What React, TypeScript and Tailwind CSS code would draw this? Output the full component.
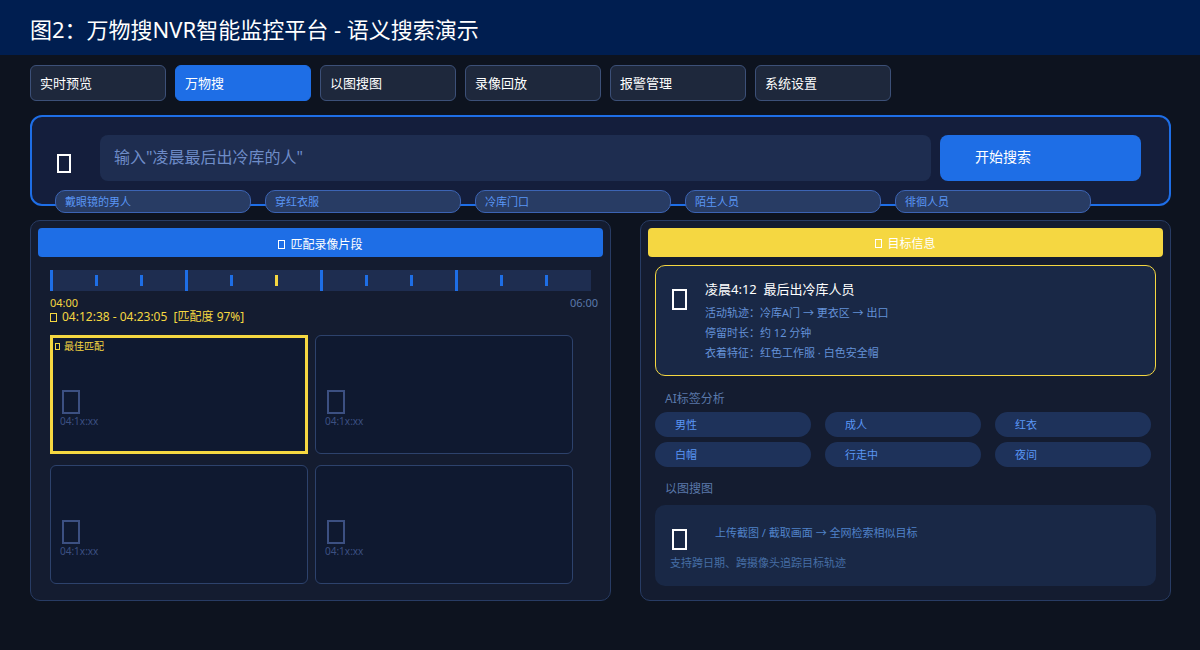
import clsx from "clsx";

const tabs = ["实时预览", "万物搜", "以图搜图", "录像回放", "报警管理", "系统设置"];
const activeTab = "万物搜";

const quickTags = ["戴眼镜的男人", "穿红衣服", "冷库门口", "陌生人员", "徘徊人员"];

const ticks = Array.from({ length: 12 }, (_, i) => ({
  major: i % 3 === 0,
  hit: i === 5,
}));

const clips = [
  { id: 1, time: "04:1x:xx", best: true },
  { id: 2, time: "04:1x:xx", best: false },
  { id: 3, time: "04:1x:xx", best: false },
  { id: 4, time: "04:1x:xx", best: false },
];

const details = [
  "活动轨迹：冷库A门 → 更衣区 → 出口",
  "停留时长：约 12 分钟",
  "衣着特征：红色工作服 · 白色安全帽",
];

const aiTags = ["男性", "成人", "红衣", "白帽", "行走中", "夜间"];

const Box = ({ className }: { className: string }) => (
  <span aria-hidden="true" className={clsx("inline-block shrink-0 border-current", className)} />
);

function Tabs() {
  return (
    <nav className="mt-[10px] flex flex-wrap gap-[9px]">
      {tabs.map((tab) => (
        <button
          key={tab}
          type="button"
          className={clsx(
            "h-9 w-[136px] rounded-md border px-[9px] pt-[2px] text-left text-[13px] text-white",
            tab === activeTab
              ? "border-[#1e6ee6] bg-[#1e6ee6]"
              : "border-[#3c5078] bg-[#1e283c]"
          )}
        >
          {tab}
        </button>
      ))}
    </nav>
  );
}

function SearchPanel() {
  return (
    <form
      className="mt-[14px] h-[91px] rounded-xl border-2 border-[#1e6ee6] bg-[#141e3c] pt-[18px]"
      onSubmit={(e) => e.preventDefault()}
    >
      <div className="flex pr-7 pl-[25px]">
        <Box className="mt-[19px] h-[19px] w-[14px] border-2 text-white" />
        <input
          type="text"
          aria-label="语义搜索"
          placeholder={'输入"凌晨最后出冷库的人"'}
          className="ml-[29px] h-[46px] min-w-0 flex-1 rounded-lg bg-[#1e2d50] px-[14px] pb-[3px] text-base text-white outline-none placeholder:text-[#6e8cc8]"
        />
        <button
          type="submit"
          className="ml-[9px] h-[46px] w-[201px] rounded-lg bg-[#1e6ee6] px-[35px] pb-[2px] text-left text-sm text-white"
        >
          开始搜索
        </button>
      </div>
      <div className="mt-[9px] flex gap-[14px] px-[23px]">
        {quickTags.map((tag) => (
          <button
            key={tag}
            type="button"
            className="h-[23px] w-[196px] rounded-[10px] border border-[#3c64b4] bg-[#283c64] px-[9px] pt-[2px] text-left text-[11px] text-[#5a96f5]"
          >
            {tag}
          </button>
        ))}
      </div>
    </form>
  );
}

function MatchPanel() {
  return (
    <section className="rounded-[10px] border border-[#283c64] bg-[#141c30] px-[7px] pt-[7px] pb-4">
      <h2 className="flex h-[29px] items-center justify-center gap-[5px] rounded bg-[#1e6ee6] pt-1 text-xs text-white">
        <Box className="h-[9px] w-[7px] border" />
        匹配录像片段
      </h2>

      <div className="mx-3 mt-[13px] grid h-[21px] grid-cols-12 items-center bg-[#1e2d50] pr-px">
        {ticks.map((tick, i) => (
          <span
            key={i}
            className={clsx(
              "w-[3px]",
              tick.major ? "h-[21px]" : "h-[11px]",
              tick.hit ? "bg-[#f5d741]" : "bg-[#1e6ee6]"
            )}
          />
        ))}
      </div>
      <div className="mt-[5px] mr-[5px] ml-3 flex justify-between text-[11px] leading-[14px]">
        <span className="text-[#f5d741]">04:00</span>
        <span className="text-[#5a78aa]">06:00</span>
      </div>
      <p className="ml-3 flex items-center gap-[5px] text-xs leading-[14px] whitespace-pre text-[#f5d741]">
        <Box className="h-[9px] w-[7px] border" />
        {"04:12:38 - 04:23:05  [匹配度 97%]"}
      </p>

      <ul className="mt-[11px] mr-[30px] ml-3 grid grid-cols-2 gap-x-[7px] gap-y-[11px]">
        {clips.map((clip) => (
          <li
            key={clip.id}
            className={clsx(
              "relative flex h-[119px] flex-col justify-end bg-[#0f1930] text-[#3c5082]",
              clip.best
                ? "border-3 border-[#f5d741] px-[7px] pb-[22px]"
                : "rounded-md border border-[#2d426c] px-[9px] pb-6"
            )}
          >
            {clip.best && (
              <span className="absolute top-[1px] left-[2px] flex items-center gap-1 text-[10px] leading-[14px] text-[#f5d741]">
                <Box className="h-[7px] w-[5px] border" />
                最佳匹配
              </span>
            )}
            <Box className="ml-[2px] h-6 w-[18px] border-2" />
            <span className="text-[10px] leading-[15px]">{clip.time}</span>
          </li>
        ))}
      </ul>
    </section>
  );
}

function TargetPanel() {
  return (
    <section className="rounded-[10px] border border-[#283c64] bg-[#141c30] px-[7px] pt-[7px] pb-[14px]">
      <h2 className="flex h-[29px] items-center justify-center gap-[5px] rounded bg-[#f5d741] pt-[2px] text-xs text-white">
        <Box className="h-[9px] w-[7px] border" />
        目标信息
      </h2>

      <div className="mx-[7px] mt-2">
        <div className="flex h-[111px] rounded-[10px] border border-[#f5d741] bg-[#192846] px-4 pt-3">
          <Box className="mt-[11px] h-[21px] w-[15px] border-2 text-white" />
          <div className="ml-[18px]">
            <h3 className="text-[13px] leading-[22px] whitespace-pre text-white">
              {"凌晨4:12  最后出冷库人员"}
            </h3>
            <ul className="mt-[3px] text-[11px] leading-5 text-[#6491d7]">
              {details.map((line) => (
                <li key={line}>{line}</li>
              ))}
            </ul>
          </div>
        </div>

        <h3 className="mt-[15px] px-[10px] text-xs leading-4 text-[#5a78aa]">AI标签分析</h3>
        <ul className="mt-[5px] mr-[5px] grid grid-cols-3 gap-x-[14px] gap-y-[5px]">
          {aiTags.map((tag) => (
            <li
              key={tag}
              className="h-[25px] rounded-full bg-[#1e325a] px-5 text-[11px] leading-[25px] text-[#5a96f5]"
            >
              {tag}
            </li>
          ))}
        </ul>

        <h3 className="mt-[14px] px-[10px] text-xs leading-4 text-[#5a78aa]">以图搜图</h3>
        <div className="mt-2 h-[81px] rounded-[10px] bg-[#192846] px-[15px] pt-[18px] text-[11px] leading-5">
          <div className="flex">
            <Box className="mt-[6px] ml-[2px] h-[21px] w-[15px] border-2 text-white" />
            <p className="ml-7 text-[#5082c8]">上传截图 / 截取画面 → 全网检索相似目标</p>
          </div>
          <p className="mt-[3px] text-[#466ea5]">支持跨日期、跨摄像头追踪目标轨迹</p>
        </div>
      </div>
    </section>
  );
}

export default function App() {
  return (
    <div className="min-h-screen bg-[#0d131f] pb-12 font-['Noto_Sans','Noto_Sans_CJK_SC',sans-serif]">
      <header className="flex h-[55px] items-center bg-[#001e50] px-[30px] pt-1">
        <h1 className="text-[22px] text-white">图2：万物搜NVR智能监控平台 - 语义搜索演示</h1>
      </header>
      <main className="pr-[29px] pl-[30px]">
        <Tabs />
        <SearchPanel />
        <div className="mt-[14px] grid grid-cols-[581fr_531fr] gap-[29px]">
          <MatchPanel />
          <TargetPanel />
        </div>
      </main>
    </div>
  );
}
